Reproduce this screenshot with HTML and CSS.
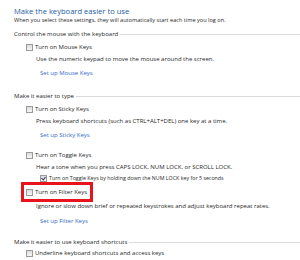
FILE: index.html
```html
<!DOCTYPE html>
<html>
	<head>
		<meta charset="utf-8">
		<title>Make the keyboard easier to use</title>
		<link rel="stylesheet" href="styles.css">
	</head>
	<body>
		<h1 class="title">Make the keyboard easier to use</h1>
		<p class="intro">When you select these settings, they will automatically start each time you log on.</p>

		<div class="group">
			<div class="group-head"><span>Control the mouse with the keyboard</span></div>
			<label class="option"><span class="box"></span>Turn on Mouse Keys</label>
			<p class="desc">Use the numeric keypad to move the mouse around the screen.</p>
			<a class="link" href="#">Set up Mouse Keys</a>
		</div>

		<div class="group">
			<div class="group-head"><span>Make it easier to type</span></div>
			<label class="option"><span class="box"></span>Turn on Sticky Keys</label>
			<p class="desc">Press keyboard shortcuts (such as CTRL+ALT+DEL) one key at a time.</p>
			<a class="link" href="#">Set up Sticky Keys</a>

			<label class="option spaced"><span class="box"></span>Turn on Toggle Keys</label>
			<p class="desc">Hear a tone when you press CAPS LOCK, NUM LOCK, or SCROLL LOCK.</p>
			<label class="option sub"><span class="box checked"></span>Turn on Toggle Keys by holding down the NUM LOCK key for 5 seconds</label>

			<label class="option marked"><span class="box"></span>Turn on Filter Keys</label>
			<p class="desc after-mark">Ignore or slow down brief or repeated keystrokes and adjust keyboard repeat rates.</p>
			<a class="link" href="#">Set up Filter Keys</a>
		</div>

		<div class="group last">
			<div class="group-head"><span>Make it easier to use keyboard shortcuts</span></div>
			<label class="option"><span class="box"></span>Underline keyboard shortcuts and access keys</label>
		</div>
	</body>
</html>
```
FILE: styles.css
```css
body {
	margin: 0;
	padding: 5px 0 0 14px;
	font-family: "Open Sans", "DejaVu Sans", sans-serif;
	font-size: 6px;
	color: #1f1f1f;
	background: #fff;
	overflow: hidden;
	white-space: nowrap;
}

.title {
	margin: 0;
	font-size: 7.6px;
	font-weight: normal;
	line-height: 12px;
	color: #1e5aa6;
}

.intro {
	margin: 0;
	line-height: 6px;
	font-size: 5.6px;
}

.group-head {
	display: flex;
	align-items: center;
	gap: 2px;
	height: 12px;
	margin-top: 5px;
}

.group-head::after {
	content: "";
	flex: 1;
	height: 1px;
	background: #dadada;
}

.group + .group .group-head {
	margin-top: 11px;
}

.group.last .group-head {
	margin-top: 9px;
}

.option {
	display: flex;
	align-items: center;
	height: 12px;
	margin: 1px 0 0 12px;
}

.group.last .option {
	margin-top: -1px;
}

.option.spaced {
	margin-top: 8px;
}

.option.sub {
	margin: -1px 0 0 26px;
	font-size: 5.3px;
}

.option.marked {
	width: fit-content;
	margin: -2px 0 -4px 7px;
	padding: 1px 3px 1px 2px;
	border: 3px solid #e8141c;
}

.box {
	position: relative;
	width: 5px;
	height: 5px;
	margin-right: 2px;
	border: 1px solid #9a9a9a;
	background: linear-gradient(#dcdcdc, #f6f6f6);
}

.box.checked::after {
	content: "";
	position: absolute;
	left: 1px;
	top: 0;
	width: 2px;
	height: 3px;
	border: solid #3a3a6a;
	border-width: 0 1px 1px 0;
	transform: rotate(40deg);
}

.desc {
	margin: 0 0 0 22px;
	line-height: 12px;
}

.desc.after-mark {
	margin-top: 2px;
}

.link {
	display: block;
	margin: 2px 0 0 26px;
	line-height: 12px;
	color: #2f67c8;
	text-decoration: none;
}

.desc.after-mark + .link {
	margin-top: 3px;
}
```
